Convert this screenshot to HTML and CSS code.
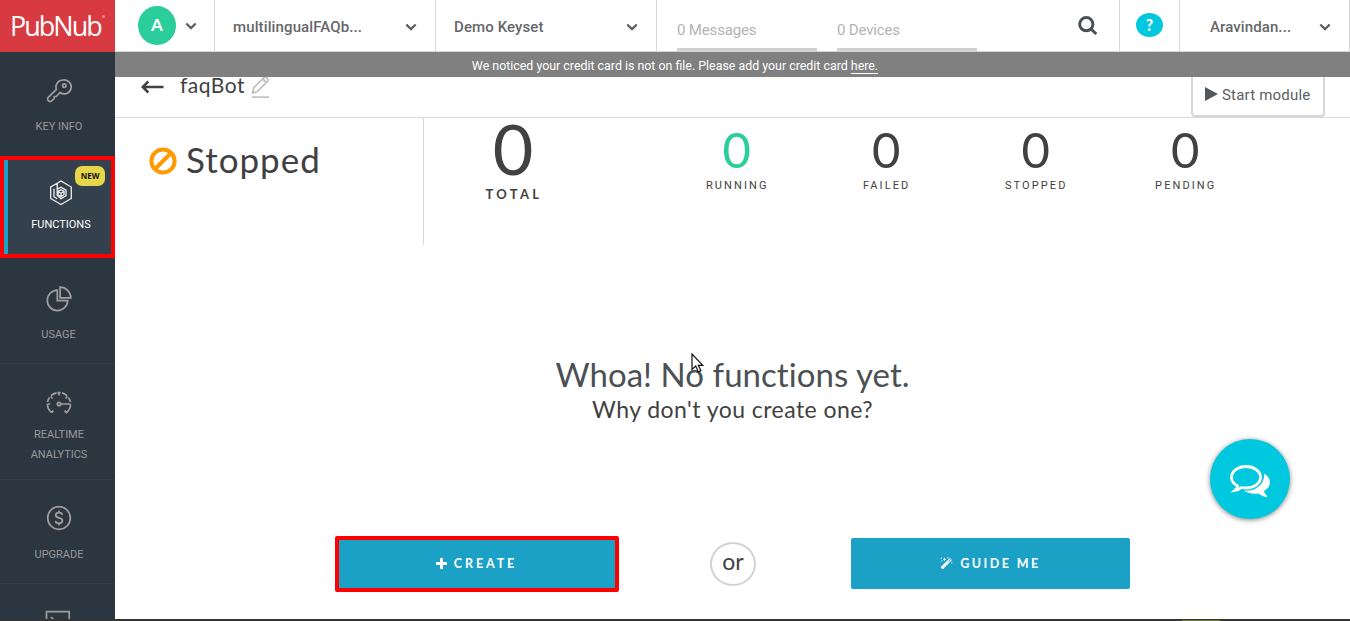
FILE: index.html
```html
<!DOCTYPE html>
<html lang="en">
<head>
<meta charset="utf-8">
<title>PubNub Functions</title>
<link rel="stylesheet" href="styles.css">
</head>
<body>
<div class="app">
  <aside class="sidebar">
    <div class="logo"><span class="logo-text">PubNub</span><i class="logo-dot"></i></div>
    <nav class="nav">
      <a class="nav-item key">
        <svg class="nav-icon" width="26" height="26" viewBox="0 0 26 26"><path d="M17 2a7 7 0 0 0-6.600 9.300L2.300 19.400a2.300 2.300 0 0 0 3.300 3.400l2.600-2.200v-2.100h2.100l3.700-4A7 7 0 1 0 17 2z" stroke-linejoin="round"/><circle cx="18.300" cy="7.600" r="1.700"/></svg>
        <span class="nav-label">KEY INFO</span>
      </a>
      <a class="nav-item functions">
        <svg class="nav-icon" width="24" height="26" viewBox="0 0 24 26"><path d="M8.200 3.300 1.700 7v11.500L12 24.600l10.300-6.100V7L12 1 8.200 3.300v11.900l3.800 3.400 5-2.900v-5.600L12 7.200l-3.800 2M5 8.800v7.900l3.200 2"/><path d="M12 9.800l3 1.700v3.200l-3 1.800-3-1.800v-3.200zM9 11.500l3 1.800 3-1.800M12 13.300v3.200"/></svg>
        <span class="nav-label">FUNCTIONS</span>
        <span class="badge">NEW</span>
      </a>
      <a class="nav-item usage">
        <svg class="nav-icon" width="26" height="26" viewBox="0 0 26 26"><path d="M11.300 4.200A10.200 10.200 0 1 0 21.700 14.600H11.300z"/><path d="M14.100 1.200v10.600h10.700A10.700 10.700 0 0 0 14.100 1.200z"/></svg>
        <span class="nav-label">USAGE</span>
      </a>
      <a class="nav-item realtime">
        <svg class="nav-icon" width="26" height="24" viewBox="0 0 26 24"><path d="M5.700 21.700A11.300 11.300 0 0 1 1.400 13M1.500 11A11.300 11.300 0 0 1 3.500 6.400M5 4.700A11.300 11.300 0 0 1 10.600 1.800M11.500 1.600h3M16 1.900a11.300 11.300 0 0 1 5 2.900M22.400 6.400A11.300 11.300 0 0 1 24.500 11M24.600 13.500a11.300 11.300 0 0 1-4.300 8.200l-1.600-2.200M5.700 21.700l1.600-2.200M1.500 13h2.800M4.600 5.500l2 2M13 1.600v2.800M21.400 5.500l-2 2M15 13h9.600"/><circle cx="13" cy="13" r="1.700"/></svg>
        <span class="nav-label">REALTIME<br>ANALYTICS</span>
      </a>
      <a class="nav-item upgrade">
        <svg class="nav-icon" width="26" height="26" viewBox="0 0 26 26"><circle cx="13" cy="13" r="11.300"/><path d="M16.300 9.800c-.3-1.500-1.600-2.100-3.300-2.100-1.800 0-3.200.9-3.200 2.500 0 3.600 6.600 1.800 6.600 5.400 0 1.700-1.400 2.700-3.400 2.700-2 0-3.300-.9-3.500-2.500M13 5.500v2.200M13 18.300v2.200" stroke-width="1.800"/></svg>
        <span class="nav-label">UPGRADE</span>
      </a>
      <a class="nav-item console">
        <svg class="nav-icon" width="26" height="22" viewBox="0 0 26 22"><path d="M1.500 1.700h22.700V20H1.500zM6 7l4 4-4 4"/></svg>
      </a>
    </nav>
  </aside>
  <div class="page">
    <header class="topbar">
      <div class="cell account"><span class="avatar">A</span><svg class="chev" width="12" height="8" viewBox="0 0 12 8"><path d="M1.300 1.500 6 6l4.700-4.500"/></svg></div>
      <div class="cell app-select"><span class="select-text t-app">multilingualFAQb...</span><svg class="chev" width="12" height="8" viewBox="0 0 12 8"><path d="M1.300 1.500 6 6l4.700-4.500"/></svg></div>
      <div class="cell key-select"><span class="select-text t-key">Demo Keyset</span><svg class="chev" width="12" height="8" viewBox="0 0 12 8"><path d="M1.300 1.500 6 6l4.700-4.500"/></svg></div>
      <div class="cell usage-cell">
        <span class="meter m-msg">0 Messages</span><span class="meter m-dev">0 Devices</span>
        <svg class="search" width="20" height="20" viewBox="0 0 20 20"><circle cx="8.300" cy="8.200" r="6.600"/><path d="M13 13l5.300 5"/></svg>
      </div>
      <div class="cell help-cell"><span class="help">?</span></div>
      <div class="cell user-cell"><span class="select-text t-user">Aravindan...</span><svg class="chev" width="12" height="8" viewBox="0 0 12 8"><path d="M1.300 1.500 6 6l4.700-4.500"/></svg></div>
    </header>
    <div class="notice"><span class="notice-text">We noticed your credit card is not on file. Please add your credit card <a>here.</a></span></div>
    <div class="module-head">
      <svg class="back" width="24" height="14" viewBox="0 0 24 14"><path d="M1.500 7H22.500M7.300 1.500 1.700 7l5.600 5.500"/></svg>
      <h1 class="module-name">faqBot</h1>
      <svg class="edit" width="20" height="22" viewBox="0 0 20 22"><path d="M1.700 16l1-5.300L13 .6q1.200-1 2.500.2l1 1q1.200 1.200.2 2.400L6.500 14.500zM11.700 2l3.600 3.500M1 20.200h17"/></svg>
      <button class="start"><svg width="13" height="14" viewBox="0 0 13 14"><path d="M0 0l13 7-13 7z"/></svg><span>Start module</span></button>
    </div>
    <section class="status">
      <div class="state"><svg width="28" height="28" viewBox="0 0 28 28"><circle cx="14" cy="14" r="11.600"/><path d="M6.500 21.500l15-15"/></svg><span>Stopped</span></div>
      <div class="total"><span class="total-num">0</span><span class="total-label">TOTAL</span></div>
      <div class="stats">
        <div class="stat green"><span class="num">0</span><span class="label">RUNNING</span></div>
        <div class="stat"><span class="num">0</span><span class="label">FAILED</span></div>
        <div class="stat"><span class="num">0</span><span class="label">STOPPED</span></div>
        <div class="stat"><span class="num">0</span><span class="label">PENDING</span></div>
      </div>
    </section>
    <main class="empty">
      <h2>Whoa! No functions yet.</h2>
      <p>Why don't you create one?</p>
      <div class="actions">
        <button class="btn create"><svg width="11" height="11" viewBox="0 0 11 11"><path d="M5.500 0v11M0 5.500h11" stroke="#fff" stroke-width="3"/></svg><span>CREATE</span></button>
        <span class="or">or</span>
        <button class="btn guide"><svg width="13" height="13" viewBox="0 0 13 13"><path d="M1.600 11.400l6.600-6.600" stroke="#fff" stroke-width="3"/><path d="M8.200 4.800l2.700-2.700" stroke="#fff" stroke-width="2.800"/><path d="M8.700 4.300l2-2" stroke="#1ba0c6" stroke-width="1"/><path d="M4.500.8v3M3 2.300h3M1.300.5v1.400M8 0v1.400M11.800 5.200v1.400M1 3.900h1.400" stroke="#fff" stroke-width=".8"/></svg><span>GUIDE ME</span></button>
      </div>
    </main>
  </div>
  <div class="taskbar"><i></i></div>
  <button class="chat" aria-label="Chat"><svg width="42" height="34" viewBox="0 0 42 34"><path d="M35.200 9.500c9 5.500 6.500 14-.2 17.300.2 2 1.500 3.700 3 4.900.5 1-.3 1.300-1.200 1.200-3-.4-5.500-1.800-7.400-3.300-5.500.8-10.500-.3-14.400-2.800 11.800.8 20.800-6.300 20.200-17.300z" fill="#fff"/><path d="M17 2.500C9 2.500 2.500 7.200 2.500 13.200c0 3.700 2.500 6.900 6.200 8.700-.2 1.600-1.200 3.200-2.700 4.500 2.500-.4 4.700-1.400 6.400-2.900 1.500.3 3 .5 4.600.5 8 0 14.500-4.800 14.500-10.800S25 2.500 17 2.500z" fill="none" stroke="#fff" stroke-width="2.800"/></svg></button>
  <svg class="cursor" width="14" height="21" viewBox="0 0 14 21"><path d="M1 1v15.500l3.700-3.400 2.600 5.800 2.600-1.200-2.600-5.400h4.500z" fill="#fff" stroke="#111" stroke-width="1.200"/></svg>
</div>
</body>
</html>
```
FILE: styles.css
```css
* { box-sizing: border-box; }
body { margin: 0; font-family: Lato, "Open Sans", sans-serif; color: #414141; background: #fff; }
h1, h2, p { margin: 0; font-weight: 400; }
button { font: inherit; color: inherit; padding: 0; border: 0; }
svg { flex: none; fill: none; }
.app { position: relative; display: flex; width: 1350px; height: 621px; overflow: hidden; }

/* Sidebar */
.sidebar { width: 115px; flex: none; background: #2b3640; }
.logo { height: 52px; background: #d83a41; color: #fff; display: flex; padding: 8px 0 0 10px; }
.logo-text { font: 400 27px/36px "Open Sans", sans-serif; letter-spacing: -2px; }
.logo-dot { width: 3px; height: 3px; margin: 7px 0 0 1px; border-radius: 50%; background: #e8868a; }
.nav { display: flex; flex-direction: column; }
.nav-item { position: relative; display: flex; flex-direction: column; align-items: center; color: #98999a; }
.nav-icon { stroke: #a09f9d; stroke-width: 1.700; margin-left: 3px; }
.nav-label { font: 400 11px/20px Roboto, sans-serif; letter-spacing: -.02px; text-align: center; margin-left: 3px; }
.key { height: 104px; padding-top: 26px; }
.key .nav-label { margin-top: 13px; }
.functions { height: 102px; border: 4px solid #f00; background: linear-gradient(90deg, #1ba0c6 4px, #34404c 4px); padding-top: 20px; }
.functions .nav-icon { stroke: #f0f0f0; stroke-width: 1.300; margin-left: 6px; }
.functions .nav-label { color: #fff; margin-top: 9px; margin-left: 7px; }
.badge { position: absolute; left: 71px; top: 6px; width: 30px; height: 20px; border-radius: 7px; background: #e6d649; color: #111; font: 700 8px/20px "Open Sans", sans-serif; text-align: center; }
.usage { height: 106px; border-bottom: 1px solid #34414a; padding-top: 28px; }
.usage .nav-label { margin-top: 13px; margin-left: 2px; }
.realtime { height: 116px; border-bottom: 1px solid #34414a; padding-top: 27px; }
.realtime .nav-label { margin-top: 10px; }
.upgrade { height: 104px; border-bottom: 1px solid #34414a; padding-top: 25px; }
.upgrade .nav-label { margin-top: 14px; }
.console { height: 37px; padding-top: 26px; }
.console .nav-icon { margin-left: 0; }

/* Top bar */
.page { width: 1235px; flex: none; }
.topbar { display: flex; height: 52px; border-bottom: 1px solid #d8d8d8; }
.cell { display: flex; align-items: center; border-right: 1px solid #d8d8d8; }
.chev { stroke: #5d6063; stroke-width: 2.400; margin-top: 3px; }
.account { width: 100px; padding-left: 23px; gap: 9px; }
.account .chev { margin-top: 0; }
.avatar { width: 38px; height: 39px; border-radius: 50%; background: #2bcd9a; color: #fff; font: 700 17px/38px Lato, sans-serif; text-align: center; }
.select-text { font: 500 15px/20px Roboto, sans-serif; color: #65676a; margin-top: 2px; }
.app-select, .key-select { width: 221px; padding: 0 18px; justify-content: space-between; }
.t-app { letter-spacing: .12px; }
.t-key, .t-user { letter-spacing: .1px; }
.usage-cell { width: 463px; padding-left: 20px; gap: 20px; align-items: flex-end; }
.meter { width: 140px; height: 36px; border-bottom: 3px solid #cfcfcf; font: 400 15px/30px Roboto, sans-serif; letter-spacing: -.15px; color: #b4b4b4; }
.search { margin: 0 0 15px 81px; stroke: #4b4f53; stroke-width: 3; }
.help-cell { width: 60px; justify-content: center; }
.help { width: 27px; height: 24px; border-radius: 50%; background: #00c8de; color: #fff; font: 900 16px/24px Lato, sans-serif; text-align: center; margin-bottom: 1px; }
.user-cell { width: 170px; padding: 0 18px 0 30px; justify-content: space-between; }
.notice { height: 25px; background: #808080; color: #fff; text-align: center; font: 400 12.400px/28px Roboto, sans-serif; padding-right: 115px; }
.notice a { border-bottom: 1px solid #fff; }

/* Module header */
.module-head { display: flex; height: 41px; border-bottom: 1px solid #d8d8d8; padding-left: 26px; align-items: flex-start; }
.back { stroke: #414141; stroke-width: 2.500; margin-top: 3px; }
.module-name { font-size: 21px; line-height: 26px; margin: -5px 0 0 15px; letter-spacing: .5px; }
.edit { stroke: #c2c2c2; stroke-width: 1.800; margin: 0 0 0 6px; }
.start { display: flex; width: 134px; height: 40px; margin: 0 25px 0 auto; border: 2px solid #d8d8d8; border-top: 0; border-radius: 0 0 4px 4px; background: #fff; color: #5d6063; padding: 9px 0 0 12px; gap: 4px; font: 400 15px/18px Roboto, sans-serif; letter-spacing: .2px; }
.start svg { fill: #55585b; margin-top: 1px; }

/* Status row */
.status { display: flex; height: 127px; }
.state { display: flex; width: 309px; border-right: 1px solid #d8d8d8; padding: 28px 0 0 34px; gap: 9px; }
.state svg { stroke: #ff9900; stroke-width: 4; margin-top: 1px; }
.state span { font-size: 35px; line-height: 26px; letter-spacing: 1px; }
.total { width: 178px; display: flex; flex-direction: column; align-items: center; }
.total-num { font-size: 70px; line-height: 61px; }
.total-label { font-weight: 700; font-size: 13px; line-height: 16px; letter-spacing: 3.300px; margin-right: -2px; margin-top: 7px; }
.stats { display: flex; margin-left: 60px; }
.stat { width: 149.500px; display: flex; flex-direction: column; align-items: center; }
.stat .num { font-size: 49px; line-height: 62px; }
.green .num { color: #2bcd9a; }
.label { font: 400 11px/14px Roboto, sans-serif; letter-spacing: 2.100px; margin-right: -1px; margin-top: -1px; }

/* Empty state */
.empty { display: flex; flex-direction: column; align-items: center; padding-top: 107px; }
.empty h2 { font-size: 33px; line-height: 44px; letter-spacing: .05px; color: #4b5055; }
.empty p { font-size: 23px; line-height: 26px; letter-spacing: .45px; }
.actions { display: flex; align-items: center; margin-top: 114px; }
.btn { display: flex; align-items: center; justify-content: center; height: 51px; width: 279px; gap: 7px; background: #1ba0c6; color: #fff; border-radius: 2px; font-weight: 700; font-size: 12.500px; line-height: 16px; letter-spacing: 2.450px; }
.guide { margin-bottom: 1px; }
.guide span { margin-top: 1px; }
.create { width: 284px; height: 56px; border: 4px solid #f00; letter-spacing: 2.900px; padding-right: 1px; }
.create svg, .create span { margin-top: -1px; }
.or { width: 46px; height: 44px; border: 2px solid #d2d2d2; border-radius: 50%; margin: 0 95px 0 91px; font-size: 23px; line-height: 35px; text-align: center; }

/* Layers over the page */
.taskbar { position: absolute; left: 0; right: 0; bottom: 0; height: 2px; background: #353434; }
.taskbar i { display: block; width: 38px; height: 1px; margin: 1px 0 0 1182px; background: #6b7d37; }
.chat { position: absolute; left: 1210px; top: 439px; width: 80px; height: 80px; border-radius: 50%; background: #00c8de; box-shadow: 0 1px 5px rgba(0,0,0,.5); display: flex; align-items: center; justify-content: center; padding-top: 4px; }
.cursor { position: absolute; left: 691px; top: 353px; }
```
